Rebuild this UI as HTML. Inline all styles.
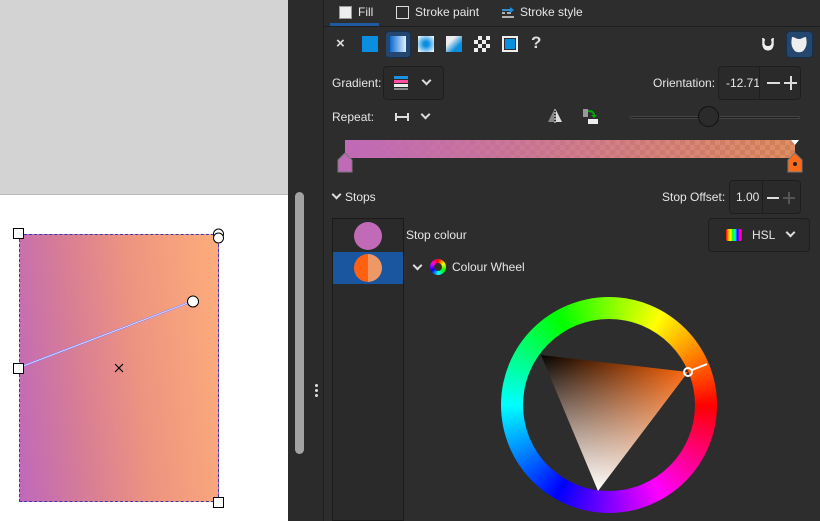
<!DOCTYPE html>
<html><head><style>
*{margin:0;padding:0;box-sizing:border-box}
body{width:820px;height:521px;overflow:hidden;position:relative;background:#2d2d2d;font-family:"Liberation Sans","DejaVu Sans",sans-serif;font-size:12px;color:#e6e6e6}
.a{position:absolute}
.box{position:absolute;border:1px solid #1e1e1e;border-radius:4px;background:#2a2a2a}
.chev{position:absolute;width:7px;height:7px;border-right:2px solid #ddd;border-bottom:2px solid #ddd;transform:rotate(45deg)}
</style></head><body>
<!-- canvas -->
<div class="a" style="left:0;top:0;width:288px;height:194px;background:#d3d3d3"></div>
<div class="a" style="left:0;top:194px;width:288px;height:327px;background:#fff;border-top:1px solid #bbb"></div>
<div class="a" style="left:19px;top:234px;width:200px;height:268px;background:linear-gradient(84deg,#bf68bb 0%,#d77d96 30%,#ee9580 60%,#fdad7b 100%);border:1px dashed #3a3ab0"></div>
<svg class="a" style="left:0;top:0" width="288" height="521">
<line x1="18" y1="368" x2="193" y2="301" stroke="#8888ff" stroke-width="2"/>
<line x1="18" y1="368" x2="193" y2="301" stroke="#fff" stroke-width="0.6"/>
<rect x="13.5" y="228.5" width="10" height="10" fill="#fff" stroke="#000"/>
<rect x="213.5" y="497.5" width="10" height="10" fill="#fff" stroke="#000"/>
<rect x="13.5" y="363.5" width="10" height="10" fill="#fff" stroke="#000"/>
<circle cx="218.5" cy="234" r="5" fill="#fff" stroke="#000"/>
<circle cx="218.5" cy="238" r="5" fill="#fff" stroke="#000"/>
<circle cx="193" cy="301.5" r="5.5" fill="#fff" stroke="#000"/>
<path d="M115 364l8 8M123 364l-8 8" stroke="#000" stroke-width="1.2"/>
</svg>
<!-- strip -->
<div class="a" style="left:288px;top:0;width:35px;height:521px;background:#2b2b2b"></div>
<div class="a" style="left:295px;top:192px;width:9px;height:262px;border-radius:5px;background:#a3a3a3"></div>
<div class="a" style="left:315px;top:384px;width:3px;height:3px;background:#ddd;border-radius:2px"></div>
<div class="a" style="left:315px;top:389px;width:3px;height:3px;background:#ddd;border-radius:2px"></div>
<div class="a" style="left:315px;top:394px;width:3px;height:3px;background:#ddd;border-radius:2px"></div>
<div class="a" style="left:323px;top:0;width:1px;height:521px;background:#1e1e1e"></div>
<!-- tabs -->
<div class="a" style="left:324px;top:26px;width:496px;height:1px;background:#1e1e1e"></div>
<div class="a" style="left:330px;top:23px;width:49px;height:3px;background:#1f5aa0"></div>
<div class="a" style="left:339px;top:6px;width:13px;height:13px;background:#eee;border:1px solid #999"></div>
<div class="a" style="left:358px;top:5px">Fill</div>
<div class="a" style="left:396px;top:6px;width:13px;height:13px;border:1.5px solid #ddd"></div>
<div class="a" style="left:415px;top:5px">Stroke paint</div>
<svg class="a" style="left:501px;top:6px" width="14" height="13"><path d="M1 4h9M1 7h3M6 7h4M1 11h12" stroke="#ddd" stroke-width="1.5"/><path d="M9 1l4 3-4 3z" fill="#1e90e0"/><path d="M1 4h8" stroke="#1e90e0" stroke-width="1.5"/></svg>
<div class="a" style="left:520px;top:5px">Stroke style</div>
<!-- paint type row -->
<div class="a" style="left:336px;top:35px;font-size:15px;font-weight:bold;color:#ddd">×</div>
<div class="a" style="left:362px;top:36px;width:16px;height:16px;background:#0a8ee0"></div>
<div class="a" style="left:385px;top:31px;width:26px;height:27px;background:#24466f;border:1px solid #16304f;border-radius:4px"></div>
<div class="a" style="left:390px;top:36px;width:16px;height:16px;background:linear-gradient(90deg,#0a6ad0,#e0f0ff)"></div>
<div class="a" style="left:418px;top:36px;width:16px;height:16px;background:radial-gradient(circle,#0a8ee0 20%,#e8f4ff 90%)"></div>
<div class="a" style="left:446px;top:36px;width:16px;height:16px;background:linear-gradient(135deg,#eee 30%,#0a8ee0 70%)"></div>
<div class="a" style="left:474px;top:36px;width:16px;height:16px;background:repeating-conic-gradient(#eee 0 25%,#2d2d2d 0 50%) 0 0/8px 8px"></div>
<div class="a" style="left:502px;top:36px;width:16px;height:16px;border:2px solid #eee;background:#0a8ee0;box-shadow:inset 0 0 0 1px #2d2d2d"></div>
<div class="a" style="left:531px;top:33px;font-size:17px;font-weight:bold;color:#ddd">?</div>
<svg class="a" style="left:760px;top:35px" width="16" height="18"><path d="M2 3c1 4 -1 7 2 11c2 2 6 2 8 0c3-4 1-7 2-11c-2 0-3 1-3 2c1 2 1 6-3 6s-4-4-3-6c0-1-1-2-3-2z" fill="#eee"/></svg>
<div class="a" style="left:786px;top:31px;width:27px;height:27px;background:#24466f;border:1px solid #16304f;border-radius:4px"></div>
<svg class="a" style="left:790px;top:35px" width="18" height="20"><path d="M2 2c3 0 4 2 7 2s4-2 7-2c1 5 1 9-2 13c-2 3-8 3-10 0c-3-4-3-8-2-13z" fill="#eee"/></svg>
<!-- gradient row -->
<div class="a" style="left:332px;top:76px">Gradient:</div>
<div class="box" style="left:383px;top:66px;width:61px;height:34px"></div>
<div class="a" style="left:394px;top:76px;width:14px;height:3px;background:#1e90e0"></div>
<div class="a" style="left:394px;top:80px;width:14px;height:3px;background:#ff4fa0"></div>
<div class="a" style="left:394px;top:84px;width:14px;height:3px;background:#eee"></div>
<div class="a" style="left:394px;top:88px;width:14px;height:2px;background:#888"></div>
<div class="chev" style="left:423px;top:77px"></div>
<div class="a" style="left:653px;top:76px">Orientation:</div>
<div class="box" style="left:718px;top:66px;width:83px;height:34px"></div>
<div class="a" style="left:726px;top:76px">-12.71</div>
<div class="a" style="left:759px;top:67px;width:1px;height:32px;background:#1e1e1e"></div>
<div class="a" style="left:767px;top:82px;width:13px;height:2px;background:#ddd"></div>
<div class="a" style="left:784px;top:82px;width:13px;height:2px;background:#ddd"></div>
<div class="a" style="left:790px;top:76px;width:2px;height:14px;background:#ddd"></div>
<!-- repeat row -->
<div class="a" style="left:332px;top:110px">Repeat:</div>
<svg class="a" style="left:395px;top:112px" width="14" height="10"><path d="M1 1v8M13 1v8M1 5h12" stroke="#ddd" stroke-width="2"/></svg>
<div class="chev" style="left:422px;top:111px"></div>
<svg class="a" style="left:546px;top:108px" width="18" height="16"><path d="M8 2L2 14h6z" fill="#888"/><path d="M10 2l6 12h-6z" fill="#ddd"/><path d="M9 1v14" stroke="#fff" stroke-dasharray="2 1"/></svg>
<svg class="a" style="left:582px;top:108px" width="18" height="18"><rect x="1" y="1" width="5" height="8" fill="#999"/><path d="M6 3c4 0 6 1 6 5" stroke="#0a0" stroke-width="2" fill="none"/><path d="M9 7l3 3 3-3z" fill="#0a0"/><rect x="6" y="11" width="10" height="5" fill="#eee"/></svg>
<div class="a" style="left:630px;top:116px;width:170px;height:3px;border-radius:2px;background:#1e1e1e;border:1px solid #444"></div>
<div class="a" style="left:698px;top:106px;width:21px;height:21px;border-radius:50%;background:#2b2b2b;border:1.5px solid #111"></div>
<!-- gradient bar -->
<div class="a" style="left:345px;top:140px;width:450px;height:18px;background:repeating-conic-gradient(#999 0 25%,#bbb 0 50%) 0 0/10px 10px"></div>
<div class="a" style="left:345px;top:140px;width:450px;height:18px;background:linear-gradient(90deg,#c06ab8,rgba(248,112,40,0.6))"></div>
<svg class="a" style="left:335px;top:137px" width="475" height="38">
<path d="M3 35v-12l7-7 7 7v12z" fill="#c06ab8" stroke="#777"/>
<path d="M453 35v-12l7-7 7 7v12z" fill="#ff6a1a" stroke="#777"/>
<circle cx="460" cy="27" r="2" fill="#222"/>
<path d="M456 3h8l-4 5z" fill="#fff"/>
</svg>
<!-- stops -->
<div class="chev" style="left:333px;top:191px"></div>
<div class="a" style="left:345px;top:190px">Stops</div>
<div class="a" style="left:662px;top:190px">Stop Offset:</div>
<div class="box" style="left:729px;top:180px;width:72px;height:34px"></div>
<div class="a" style="left:736px;top:190px">1.00</div>
<div class="a" style="left:762px;top:181px;width:1px;height:32px;background:#1e1e1e"></div>
<div class="a" style="left:767px;top:197px;width:12px;height:2px;background:#ddd"></div>
<div class="a" style="left:783px;top:197px;width:12px;height:2px;background:#555"></div>
<div class="a" style="left:788px;top:192px;width:2px;height:12px;background:#555"></div>
<div class="a" style="left:332px;top:218px;width:72px;height:303px;border:1px solid #1a1a1a;background:#2a2a2a"></div>
<div class="a" style="left:354px;top:222px;width:28px;height:28px;border-radius:50%;background:#c06ab8"></div>
<div class="a" style="left:333px;top:252px;width:70px;height:32px;background:#1a56a0"></div>
<div class="a" style="left:354px;top:254px;width:28px;height:28px;border-radius:50%;background:linear-gradient(90deg,#ff6110 50%,#ee9866 50%)"></div>
<div class="a" style="left:406px;top:228px">Stop colour</div>
<div class="box" style="left:708px;top:218px;width:102px;height:34px;background:#2b2b2b"></div>
<div class="a" style="left:726px;top:229px;width:16px;height:12px;border-radius:2px;background:linear-gradient(90deg,red,orange,yellow,lime,cyan,blue,magenta,red)"></div>
<div class="a" style="left:752px;top:228px">HSL</div>
<div class="chev" style="left:787px;top:229px"></div>
<div class="chev" style="left:414px;top:262px"></div>
<div class="a" style="left:430px;top:259px;width:16px;height:16px;border-radius:50%;background:conic-gradient(red,yellow,lime,cyan,blue,magenta,red);"><div style="margin:4px;width:8px;height:8px;border-radius:50%;background:#2d2d2d"></div></div>
<div class="a" style="left:452px;top:260px">Colour Wheel</div>
<!-- wheel -->
<div class="a" style="left:501px;top:297px;width:216px;height:216px;border-radius:50%;background:conic-gradient(hsl(90,100%,50%),hsl(60,100%,50%) 30deg,hsl(30,100%,50%) 60deg,hsl(0,100%,50%) 90deg,hsl(330,100%,50%) 120deg,hsl(300,100%,50%) 150deg,hsl(270,100%,50%) 180deg,hsl(240,100%,50%) 210deg,hsl(210,100%,50%) 240deg,hsl(180,100%,50%) 270deg,hsl(150,100%,50%) 300deg,hsl(120,100%,50%) 330deg,hsl(90,100%,50%) 360deg)"></div>
<div class="a" style="left:523px;top:319px;width:172px;height:172px;border-radius:50%;background:#2d2d2d"></div>
<svg class="a" style="left:490px;top:290px" width="240" height="231">
<defs>
<linearGradient id="g1" gradientUnits="userSpaceOnUse" x1="51" y1="65" x2="198" y2="82"><stop offset="0" stop-color="#000"/><stop offset="1" stop-color="#ff6a10"/></linearGradient>
<linearGradient id="g2" gradientUnits="userSpaceOnUse" x1="108" y1="201" x2="124" y2="73"><stop offset="0" stop-color="#fff"/><stop offset="1" stop-color="#fff" stop-opacity="0"/></linearGradient>
</defs>
<path d="M51 65L198 82L108 201z" fill="url(#g1)"/>
<path d="M51 65L198 82L108 201z" fill="url(#g2)"/>
<circle cx="198" cy="82" r="4" fill="none" stroke="#fff" stroke-width="2"/>
<path d="M202 80l15-6" stroke="#fff" stroke-width="2"/>
</svg>
</body></html>
